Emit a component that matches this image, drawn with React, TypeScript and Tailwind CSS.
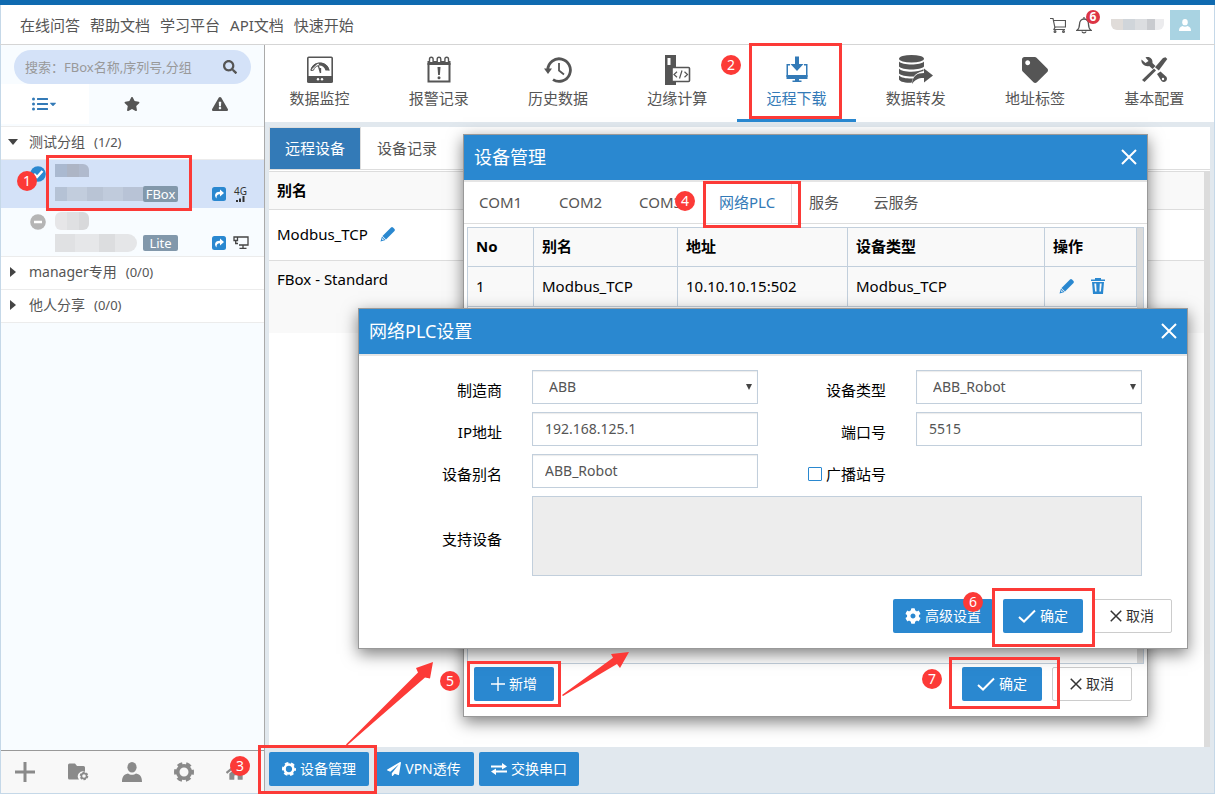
import type { ReactNode } from "react";
import { FaCaretDown, FaCog, FaExclamationTriangle, FaHome, FaListUl, FaPaperPlane, FaSearch, FaStar, FaTag } from "react-icons/fa";

const MeterIcon = () => (
    <svg viewBox="0 0 28 30" className="h-[30px] w-7" fill="none" stroke="currentColor">
        <rect x="1.800" y="2.300" width="24.400" height="25" rx="1" strokeWidth="1.600" />
        <path d="M1 21h26v5.500a1 1 0 0 1-1 1H2a1 1 0 0 1-1-1z" fill="currentColor" stroke="none" />
        <path d="M4.500 15.500C6 5 22 5 23.500 15.500h-4c-1-3.500-3-5-6.500-5l-.5-2.800z" fill="currentColor" stroke="none" />
        <path d="M5 15.500C6 6 21 5 23 15.500M5 15.500l2.500-.3c.8-2.500 2.500-4.200 5-4.500" strokeWidth="1" />
        <path d="M12.300 10.500l2.200 7.500M14.500 18V13" strokeWidth="1.300" />
        <circle cx="12" cy="24.300" r="1.200" fill="#fff" stroke="none" />
        <circle cx="16" cy="24.300" r="1.200" fill="#fff" stroke="none" />
    </svg>
);

const AlarmIcon = () => (
    <svg viewBox="0 0 28 30" className="h-[30px] w-7" fill="none" stroke="currentColor">
        <path d="M3.500 8v18.500h21V8" strokeWidth="2" />
        <path d="M2.500 6h23v4h-23z" fill="currentColor" stroke="none" />
        <path d="M4.500 7V4a1.800 1.800 0 0 1 3.600 0v3M12.200 7V4a1.800 1.800 0 0 1 3.600 0v3M19.900 7V4a1.800 1.800 0 0 1 3.600 0v3" strokeWidth="1.400" fill="#fff" />
        <path d="M12.500 12h3l-.6 8h-1.800z" fill="currentColor" stroke="none" />
        <circle cx="14" cy="22.800" r="1.500" fill="currentColor" stroke="none" />
    </svg>
);

const HistoryIcon = () => (
    <svg viewBox="0 0 28 30" className="h-[30px] w-7" fill="none" stroke="currentColor">
        <path d="M3.800 14.500A11.300 11.300 0 1 1 9 24.600" strokeWidth="2.800" />
        <path d="M0 13.500h8l-4 5.500z" fill="currentColor" stroke="none" />
        <path d="M15 8v7.500l5 4" strokeWidth="1.800" />
    </svg>
);

const EdgeIcon = () => (
    <svg viewBox="0 0 28 30" className="h-[30px] w-7" fill="none" stroke="currentColor">
        <path d="M2 0h11v14H9v13h4v3H2z" fill="currentColor" stroke="none" />
        <path d="M4.500 3h3v7h-3z" fill="#fff" stroke="none" />
        <rect x="9" y="12.500" width="17.500" height="14" rx="1" fill="#fff" strokeWidth="1.600" />
        <path d="M14 16.800l-3 2.700 3 2.700M21.500 16.800l3 2.700-3 2.700M19 15.500l-2.500 8" strokeWidth="1.200" />
    </svg>
);

const DownloadIcon = () => (
    <svg viewBox="0 0 28 30" className="h-[30px] w-7" fill="currentColor">
        <path d="M12 1.500h4V9h4.500L14 16 7.500 9H12z" />
        <path d="M7 9H3.500v13h21V9H21v1.500h2V20H5V10.500h2z" />
        <path d="M3.500 20h21v4h-21zM12 23h4v2.500h2.500V27h-9v-1.500H12z" />
    </svg>
);

const ForwardIcon = () => (
    <svg viewBox="0 0 36 30" className="h-[30px] w-9" fill="currentColor">
        <ellipse cx="13.500" cy="3.800" rx="12.500" ry="3.800" />
        <path d="M1 6.500c3 4 22 4 25 0v5c-3 4-22 4-25 0z" />
        <path d="M1 13.500c3 4 19 4.200 24.500.8v1.800c-5.500 1.200-8.500 3.500-9.500 5.400-7 .2-13-.8-15-3z" />
        <path d="M1 20.500c2.500 2.500 8 3.200 14 3l-1.500 4.300C7.500 27.800 2 27 1 24.500z" />
        <path d="M14 29c.5-8 5-11 12-11v-4.500l9 7-9 7V23c-5-.2-9 1.500-12 6z" />
    </svg>
);

const ToolsIcon = () => (
    <svg viewBox="0 0 28 30" className="h-[30px] w-7" fill="currentColor">
        <path d="M25.500 2.200l1.800 1.800-8.500 11.500-3.800-3.200L23 3z" />
        <path d="M14 13.500l2 2L4.500 27 2 25z" />
        <path d="M1.500 4.500l4 3.500L8.500 6 5.500 2.500c4-1.500 7.500 1.200 7 5.500l3 3-3 3-3.300-3c-4 1-8.500-2-7.700-6.500z" />
        <path d="M17 19l3.500-2.500 5.500 5c3 3-1.500 7.500-4.500 4.500z" />
        <circle cx="23" cy="24" r="1.200" fill="#fff" />
    </svg>
);

const CartIcon = () => (
    <svg viewBox="0 0 16 16" className="size-4" fill="none" stroke="currentColor" strokeWidth="1.200">
        <path d="M0 1.500h3l2 9.500M3.500 3.500h12v6.500H5M5 10l-1 2.500h11" />
        <circle cx="5" cy="14.500" r=".9" />
        <circle cx="13.500" cy="14.500" r=".9" />
    </svg>
);

const BellIcon = () => (
    <svg viewBox="0 0 16 18" className="h-[18px] w-4" fill="none" stroke="currentColor" strokeWidth="1.300">
        <path d="M8 1v2M1 14.300c2-1.500 2.500-3 2.500-6C3.500 5 5.500 3 8 3s4.500 2 4.500 5.300c0 3 .5 4.500 2.500 6zM6 15.500c.3 1.800 3.700 1.800 4 0" />
    </svg>
);

const UserIcon = ({ className }: { className: string }) => (
    <svg viewBox="0 0 20 20" className={className} fill="currentColor">
        <ellipse cx="10" cy="5.300" rx="4.600" ry="5.300" />
        <path d="M0 20c0-5 1.500-7.500 6-8.500 2 1.800 6 1.800 8 0 4.500 1 6 3.500 6 8.500z" />
    </svg>
);

const PencilIcon = () => (
    <svg viewBox="0 0 16 16" className="size-4" fill="currentColor">
        <path d="M11 1.500a1.500 1.500 0 0 1 2 0l1.500 1.500a1.500 1.500 0 0 1 0 2L6 13.500 2.500 10z" />
        <path fillRule="evenodd" d="M2 10.500L.5 15.500l5-1.500zM2.500 12L4 13.500l-2 .6z" />
    </svg>
);

const CheckIcon = () => (
    <svg viewBox="0 0 18 14" className="h-3.5 w-[18px]" fill="none" stroke="currentColor" strokeWidth="2"><path d="M1 8l5 4.500L17 1.500" /></svg>
);

const CrossIcon = ({ className }: { className: string }) => (
    <svg viewBox="0 0 16 16" className={className} fill="none" stroke="currentColor"><path d="M1 1l14 14M15 1L1 15" /></svg>
);

const PlusIcon = ({ className }: { className: string }) => (
    <svg viewBox="0 0 20 20" className={className} fill="none" stroke="currentColor"><path d="M10 0v20M0 10h20" /></svg>
);

const TrashIcon = () => (
    <svg viewBox="0 0 14 16" className="h-4 w-3.5" fill="currentColor">
        <path d="M4 0h6v1.500h4V3H0V1.500h4z" />
        <path fillRule="evenodd" d="M1 4h12l-1 12H2zM3.300 5.500l.8 8h1.500l-.4-8zM8.800 5.500l-.4 8h1.500l.8-8z" />
    </svg>
);

// Gear with six blunt teeth and an open centre
const GearIcon = ({ className }: { className: string }) => (
    <svg viewBox="0 0 20 20" className={className} fill="none" stroke="currentColor">
        <circle cx="10" cy="10" r="6.300" strokeWidth="3.600" />
        <circle cx="10" cy="10" r="8.500" strokeWidth="3" strokeDasharray="5 3.900" strokeDashoffset="2.500" />
    </svg>
);

const FolderIcon = () => (
    <svg viewBox="0 0 22 20" className="h-5 w-[22px]" fill="currentColor">
        <path d="M1 3a1.500 1.500 0 0 1 1.500-1.500H8l2 2.500h6.500A1.500 1.500 0 0 1 18 5.500v4.300a5 5 0 0 0-6 7.700H2.500A1.500 1.500 0 0 1 1 16z" />
        <circle cx="17" cy="14" r="2.600" fill="none" stroke="currentColor" strokeWidth="1.600" />
        <circle cx="17" cy="14" r="3.700" fill="none" stroke="currentColor" strokeWidth="1.200" strokeDasharray="2.200 1.670" />
    </svg>
);

const SwapIcon = () => (
    <svg viewBox="0 0 16 12" className="h-3 w-4" fill="currentColor"><path d="M0 2.500h11V0l5 3.500-5 3V4.500H0zM16 9.500H5V12L0 8.500l5-3v2h11z" /></svg>
);

const ShareIcon = () => (
    <svg viewBox="0 0 14 14" className="size-3.5">
        <rect width="14" height="14" rx="2.500" fill="#2a88d0" />
        <path d="M8 2.500L12 6 8 9.500V7.300C5.500 7.200 4.500 8.500 4.500 11.500 1.500 8 3.500 4.500 8 4.700z" fill="#fff" />
    </svg>
);

const Badge = ({ n, className }: { n: number; className: string }) => (
    <span className={`absolute flex size-5 items-center justify-center rounded-full bg-[#fc3a37] text-sm leading-none text-white ${className}`}>{n}</span>
);

const navItems = [
    { label: "数据监控", icon: <MeterIcon /> },
    { label: "报警记录", icon: <AlarmIcon /> },
    { label: "历史数据", icon: <HistoryIcon /> },
    { label: "边缘计算", icon: <EdgeIcon /> },
    { label: "远程下载", icon: <DownloadIcon />, active: true },
    { label: "数据转发", icon: <ForwardIcon /> },
    { label: "地址标签", icon: <FaTag className="size-[26px]" /> },
    { label: "基本配置", icon: <ToolsIcon /> },
];

const btn = "flex h-[34px] items-center justify-center gap-1 rounded-xs text-sm whitespace-nowrap";
const primary = `${btn} bg-[#2a88d0] text-white`;
const plain = `${btn} w-20 border border-[#ccc] bg-white text-[#333]`;
const field = "h-[34px] w-full border border-[#c2cfdc] bg-white px-3 text-sm text-[#555] shadow-[inset_0_1px_1px_rgba(0,0,0,0.08)]";
const label = "pt-1.5 text-right leading-7";

function Group({ name, count, open }: { name: string; count: string; open?: boolean }) {
    return (
        <button className="flex h-[33px] w-full items-center border-b border-[#ececec] bg-white pb-0.5 pl-[7px] text-sm text-[#555]">
            <svg viewBox="0 0 10 10" className="size-2.5" fill="#444"><path d={open ? "M0 2h10L5 8z" : "M2 0l6 5-6 5z"} /></svg>
            <span className="ml-[11px]">{name}</span>
            <span className="ml-[9px] text-[13px]">{count}</span>
        </button>
    );
}

function Device({ tag, online }: { tag: string; online?: boolean }) {
    return (
        <div className={`flex h-12 pt-1 pl-[29px] ${online ? "bg-[#d4e2f8]" : ""}`}>
            <svg viewBox="0 0 16 16" className="mt-0.5 size-4">
                <circle cx="8" cy="8" r="7.800" fill={online ? "#2a88d0" : "#b5b5b5"} />
                <path d={online ? "M4 8l3 3 5.500-6" : "M4 8h8"} fill="none" stroke="#fff" strokeWidth="2.500" />
            </svg>
            <div className="ml-[9px] flex-1">
                {online ? (
                    <div className="flex h-[13px] w-[34px] overflow-hidden rounded-tr-md">
                        <i className="w-3 bg-[#aab9d0]" /><i className="w-3 bg-[#adb5c5]" /><i className="flex-1 bg-[#b0bacd]" />
                    </div>
                ) : (
                    <div className="flex h-[18px] w-[34px] overflow-hidden rounded-md">
                        <i className="w-3 bg-[#e6e6e8]" /><i className="w-3 bg-[#dfe0e2]" /><i className="flex-1 bg-[#d8d9db]" />
                    </div>
                )}
                <div className={`flex items-center ${online ? "mt-[9px]" : "mt-1"}`}>
                    {online ? (
                        <div className="flex h-3.5 w-[88px] overflow-hidden">
                            <i className="w-3 bg-[#b5c2d5]" /><i className="w-5 bg-[#c2cddd]" /><i className="w-4 bg-[#b9c4d5]" /><i className="w-5 bg-[#c0cbdc]" /><i className="flex-1 bg-[#b8c3d6]" />
                        </div>
                    ) : (
                        <div className="mr-1.5 flex h-[18px] w-[82px] overflow-hidden rounded-r-xl">
                            <i className="w-5 bg-[#e0e1e3]" /><i className="w-6 bg-[#e6e7e9]" /><i className="w-4 bg-[#dcdddf]" /><i className="flex-1 bg-[#e5e6e8]" />
                        </div>
                    )}
                    <span className="flex h-4 w-[35px] items-center justify-center rounded-xs bg-[#8298ab] text-[13px] text-white">{tag}</span>
                    <span className="ml-[34px]"><ShareIcon /></span>
                    {online ? (
                        <span className="ml-2 flex w-[13px] flex-col items-center text-[10px] leading-[9px] text-[#333]">
                            4G
                            <svg viewBox="0 0 9 6" className="h-1.5 w-[9px]" fill="#333"><path d="M0 4h2v2H0zM3 2.500h2V6H3zM6.500 0h2v6h-2z" /></svg>
                        </span>
                    ) : (
                        <svg viewBox="0 0 16 14" className="ml-[7px] h-3.5 w-4" fill="none" stroke="#444" strokeWidth="1.300"><path d="M4 1h11v8H6M10 9v3M6.500 12.300h7M1 1h3.500v3.500H1zM2.700 4.500v3H5" /></svg>
                    )}
                </div>
            </div>
        </div>
    );
}

function Sidebar() {
    return (
        <aside className="flex w-[264px] shrink-0 flex-col border-r border-[#aaa] bg-[#f8fcff]">
            <label className="mx-[13px] mt-[5px] flex h-[34px] items-center rounded-full bg-[#d4e2f8] pr-3.5 pl-[11px] text-[#555]">
                <input aria-label="搜索" placeholder="搜索：FBox名称,序列号,分组" className="min-w-0 flex-1 bg-transparent text-[13px] outline-none placeholder:text-[#999]" />
                <FaSearch className="size-3.5" />
            </label>
            <div className="grid h-[43px] grid-cols-3 border-b border-[#ececec] pb-0.5 text-[#555]">
                <button aria-label="分组" className="flex items-center justify-center bg-white text-[#337ab7]"><FaListUl className="size-4" /><FaCaretDown className="size-2.5" /></button>
                <button aria-label="收藏" className="flex items-center justify-center"><FaStar className="size-4" /></button>
                <button aria-label="报警" className="flex items-center justify-center"><FaExclamationTriangle className="size-4" /></button>
            </div>
            <Group name="测试分组" count="(1/2)" open />
            <Device tag="FBox" online />
            <Device tag="Lite" />
            <div className="border-t border-[#ececec]">
                <Group name="manager专用" count="(0/0)" />
                <Group name="他人分享" count="(0/0)" />
            </div>
            <div className="mt-auto flex h-[43px] items-center justify-between border-t border-[#999] bg-[#f8f8f8] px-3.5 text-[#8a8a8a]">
                <button aria-label="添加"><PlusIcon className="size-5 stroke-3" /></button>
                <button aria-label="文件夹"><FolderIcon /></button>
                <button aria-label="用户"><UserIcon className="size-5" /></button>
                <button aria-label="设置"><GearIcon className="size-5" /></button>
                <button aria-label="主页" className="mr-1"><FaHome className="size-5" /></button>
            </div>
        </aside>
    );
}

function RemoteDevices() {
    return (
        <section className="flex min-h-0 flex-1 flex-col bg-white">
            <div className="flex h-[43px] border-b border-[#ddd] text-[#555]">
                <button className="w-[92px] border border-b-0 border-[#ddd] bg-[#337ab7] pb-0.5 text-white">远程设备</button>
                <button className="w-[92px]">设备记录</button>
            </div>
            <div className="mt-px min-h-0 flex-1 border-r-[6px] border-[#dcdcdc]">
                <table className="w-full border-collapse text-left text-black">
                    <thead>
                        <tr className="h-[38px] border-y border-[#ddd] bg-[#f9f9f9]"><th className="pb-0.5 pl-2">别名</th></tr>
                    </thead>
                    <tbody>
                        <tr className="h-[51px] border-b border-[#ddd]">
                            <td className="pb-0.5 pl-2">
                                <div className="flex items-center gap-3">Modbus_TCP<button aria-label="编辑" className="text-[#2a88d0]"><PencilIcon /></button></div>
                            </td>
                        </tr>
                        <tr className="h-[72px] bg-[#f9f9f9] align-top"><td className="pt-2 pl-2">FBox - Standard</td></tr>
                    </tbody>
                </table>
            </div>
        </section>
    );
}

function Dialog({ title, className, children }: { title: string; className: string; children: ReactNode }) {
    return (
        <div role="dialog" aria-label={title} className={`absolute flex flex-col border border-[#999] bg-white shadow-[0_5px_15px_rgba(0,0,0,0.5)] ${className}`}>
            <div className="flex h-[47px] shrink-0 items-center justify-between border-b-2 border-[#e5e5e5] bg-[#2a88d0] px-2.5 pb-0.5 text-lg text-white">
                <h2>{title}</h2>
                <button aria-label="关闭"><CrossIcon className="size-4 stroke-2" /></button>
            </div>
            {children}
        </div>
    );
}

function DeviceManager() {
    const cell = "border-r border-b border-[#c2cfdc] px-2 pb-0.5";
    const tab = "pb-0.5 pl-[15px] text-left";
    return (
        <Dialog title="设备管理" className="top-[134px] left-[463px] h-[583px] w-[685px]">
            <div className="flex h-[42px] shrink-0 border-b border-[#ddd] text-[#555]">
                <button className={`${tab} w-20`}>COM1</button>
                <button className={`${tab} w-20`}>COM2</button>
                <button className={`${tab} w-20`}>COM3</button>
                <button className={`${tab} w-[88px] border-r border-[#ddd] text-[#337ab7]`}>网络PLC</button>
                <button className="w-16 pb-0.5">服务</button>
                <button className="w-20 pb-0.5">云服务</button>
            </div>
            <div className="mx-[3px] mt-[3px] min-h-0 flex-1 border border-[#c2cfdc]">
                <div className="h-full border-r-[6px] border-[#dcdcdc]">
                    <table className="w-full table-fixed border-separate border-spacing-0 bg-[#f9f9f9] text-left text-black">
                        <thead>
                            <tr className="h-[39px]">
                                <th className={`${cell} w-[66px]`}>No</th>
                                <th className={`${cell} w-36`}>别名</th>
                                <th className={`${cell} w-[170px]`}>地址</th>
                                <th className={`${cell} w-[197px]`}>设备类型</th>
                                <th className={cell}>操作</th>
                            </tr>
                        </thead>
                        <tbody>
                            <tr className="h-10">
                                <td className={cell}>1</td>
                                <td className={cell}>Modbus_TCP</td>
                                <td className={cell}>10.10.10.15:502</td>
                                <td className={cell}>Modbus_TCP</td>
                                <td className={cell}>
                                    <div className="flex gap-4 pl-1.5 text-[#2a88d0]">
                                        <button aria-label="编辑"><PencilIcon /></button>
                                        <button aria-label="删除"><TrashIcon /></button>
                                    </div>
                                </td>
                            </tr>
                        </tbody>
                    </table>
                </div>
            </div>
            <div className="flex h-[52px] shrink-0 pt-[3px] pr-[15px] pl-2.5">
                <button className={`${primary} w-20`}><PlusIcon className="size-3.5 stroke-2" />新增</button>
                <button className={`${primary} mr-2.5 ml-auto w-20`}><CheckIcon />确定</button>
                <button className={plain}><CrossIcon className="size-3 stroke-2" />取消</button>
            </div>
        </Dialog>
    );
}

function SelectField({ id, value }: { id: string; value: string }) {
    return (
        <div className="relative">
            <select id={id} className={`${field} appearance-none pl-4`}><option>{value}</option></select>
            <svg viewBox="0 0 6 6" className="pointer-events-none absolute top-3.5 right-1.5 size-1.5" fill="#444"><path d="M0 0h6L3 6z" /></svg>
        </div>
    );
}

function PlcSettings() {
    return (
        <Dialog title="网络PLC设置" className="top-[308px] left-[358px] h-[341px] w-[830px]">
            <form className="grid grid-cols-[1fr_226px_98px_226px] gap-x-[30px] gap-y-2 pt-3.5 pr-[45px] text-black">
                <label htmlFor="vendor" className={label}>制造商</label>
                <SelectField id="vendor" value="ABB" />
                <label htmlFor="type" className={label}>设备类型</label>
                <SelectField id="type" value="ABB_Robot" />
                <label htmlFor="ip" className={label}>IP地址</label>
                <input id="ip" className={`${field} pb-0.5`} defaultValue="192.168.125.1" />
                <label htmlFor="port" className={label}>端口号</label>
                <input id="port" className={`${field} pb-0.5`} defaultValue="5515" />
                <label htmlFor="alias" className={label}>设备别名</label>
                <input id="alias" className={`${field} pb-0.5`} defaultValue="ABB_Robot" />
                <label className="flex items-center justify-end gap-1 pt-1.5 leading-7">
                    <input type="checkbox" className="size-3.5 appearance-none rounded-[1px] border border-[#2a88d0]" />广播站号
                </label>
                <span />
                <label htmlFor="support" className="self-center pt-1.5 text-right">支持设备</label>
                <textarea id="support" readOnly className="col-span-3 h-20 resize-none border border-[#c2cfdc] bg-[#ededed]" />
            </form>
            <div className="mt-auto flex justify-end pr-[15px] pb-[15px]">
                <button className={`${primary} mr-2.5 w-[100px]`}><FaCog className="size-4" />高级设置</button>
                <button className={`${primary} mr-[9px] w-20`}><CheckIcon />确定</button>
                <button className={plain}><CrossIcon className="size-3 stroke-2" />取消</button>
            </div>
        </Dialog>
    );
}

function Steps() {
    const frame = "absolute border-3 border-[#fc3a37]";
    return (
        <div className="pointer-events-none absolute inset-0">
            <div className={`${frame} top-[155px] left-[46px] h-14 w-[146px]`} />
            <div className={`${frame} top-[43px] left-[749px] h-[76px] w-[93px]`} />
            <div className={`${frame} top-[745px] left-[258px] h-[49px] w-[119px]`} />
            <div className={`${frame} top-[181px] left-[703px] h-[47px] w-[98px]`} />
            <div className={`${frame} top-[661px] left-[467px] h-[46px] w-[94px]`} />
            <div className={`${frame} top-[588px] left-[992px] h-[59px] w-[103px]`} />
            <div className={`${frame} top-[657px] left-[949px] h-[52px] w-[111px]`} />
            <svg viewBox="0 0 290 100" className="absolute top-[650px] left-[344px] h-[100px] w-[290px]" fill="#fc3a37">
                <path d="M2 94.500L74 22.500 72 18l17-6-3 16.500-5-1L3 95.500z" />
                <path d="M218 45l51-37.300L267 4l18-2-9 16-3-4-54 32z" />
            </svg>
            <Badge n={1} className="top-[171px] left-[17px]" />
            <Badge n={2} className="top-[55px] left-[721px]" />
            <Badge n={3} className="top-[756px] left-[230px]" />
            <Badge n={4} className="top-[191px] left-[675px]" />
            <Badge n={5} className="top-[671px] left-[440px]" />
            <Badge n={6} className="top-[592px] left-[963px]" />
            <Badge n={7} className="top-[669px] left-[922px]" />
        </div>
    );
}

export default function App() {
    return (
        <div className="relative h-screen overflow-hidden font-['Noto_Sans','Noto_Sans_CJK_SC',sans-serif] text-[15px] leading-5">
            <div className="flex h-full flex-col border-x border-b border-[#c5d8e8] bg-white">
                <header className="-mx-px flex h-[45px] shrink-0 items-center border-t-5 border-b border-t-[#0f6ab0] border-b-[#d5d5d5] px-5 text-[#555]">
                    <nav className="flex gap-2.5">
                        <a href="#qa">在线问答</a>
                        <a href="#help">帮助文档</a>
                        <a href="#learn">学习平台</a>
                        <a href="#api">API文档</a>
                        <a href="#start">快速开始</a>
                    </nav>
                    <div className="-mr-[5px] ml-auto flex items-center">
                        <button aria-label="购物车"><CartIcon /></button>
                        <button aria-label="消息" className="relative ml-2.5">
                            <BellIcon />
                            <span className="absolute -top-1.5 left-2.5 flex size-3.5 items-center justify-center rounded-full bg-[#dc3545] text-xs font-bold text-white">6</span>
                        </button>
                        <div className="mr-1.5 ml-[19px] flex h-[11px] w-[53px] overflow-hidden rounded-b-md">
                            <i className="w-3 bg-[#e0dcd9]" /><i className="w-3 bg-[#d0d5da]" /><i className="w-3 bg-[#dbdde0]" /><i className="w-2 bg-[#c9cbcf]" /><i className="flex-1 bg-[#ececee]" />
                        </div>
                        <button aria-label="账号" className="flex size-[30px] items-center justify-center bg-[#a9d3e2] text-white"><UserIcon className="size-3" /></button>
                    </div>
                </header>
                <div className="flex min-h-0 flex-1">
                    <Sidebar />
                    <main className="flex min-w-0 flex-1 flex-col bg-[#e1e8ee]">
                        <div className="bg-white">
                            <nav className="-ml-[5px] grid grid-cols-8 text-[#555]">
                                {navItems.map((item) => (
                                    <a key={item.label} href="#nav" className={`flex h-[77px] flex-col items-center border-b-3 pt-2.5 ${item.active ? "border-[#2a88d0] text-[#337ab7]" : "border-transparent"}`}>
                                        <span className="flex h-[30px] items-center">{item.icon}</span>
                                        <span className="mt-[3px]">{item.label}</span>
                                    </a>
                                ))}
                            </nav>
                        </div>
                        <div className="flex min-h-0 flex-1 flex-col pt-[5px] pr-1 pl-1">
                            <RemoteDevices />
                            <div className="flex h-[46px] shrink-0 gap-[5px] pt-[5px]">
                                <button className={`${primary} w-[100px]`}><GearIcon className="size-3.5" />设备管理</button>
                                <button className={`${primary} w-[100px]`}><FaPaperPlane className="size-3.5" />VPN透传</button>
                                <button className={`${primary} w-[100px]`}><SwapIcon />交换串口</button>
                            </div>
                        </div>
                    </main>
                </div>
            </div>
            <DeviceManager />
            <PlcSettings />
            <Steps />
        </div>
    );
}
